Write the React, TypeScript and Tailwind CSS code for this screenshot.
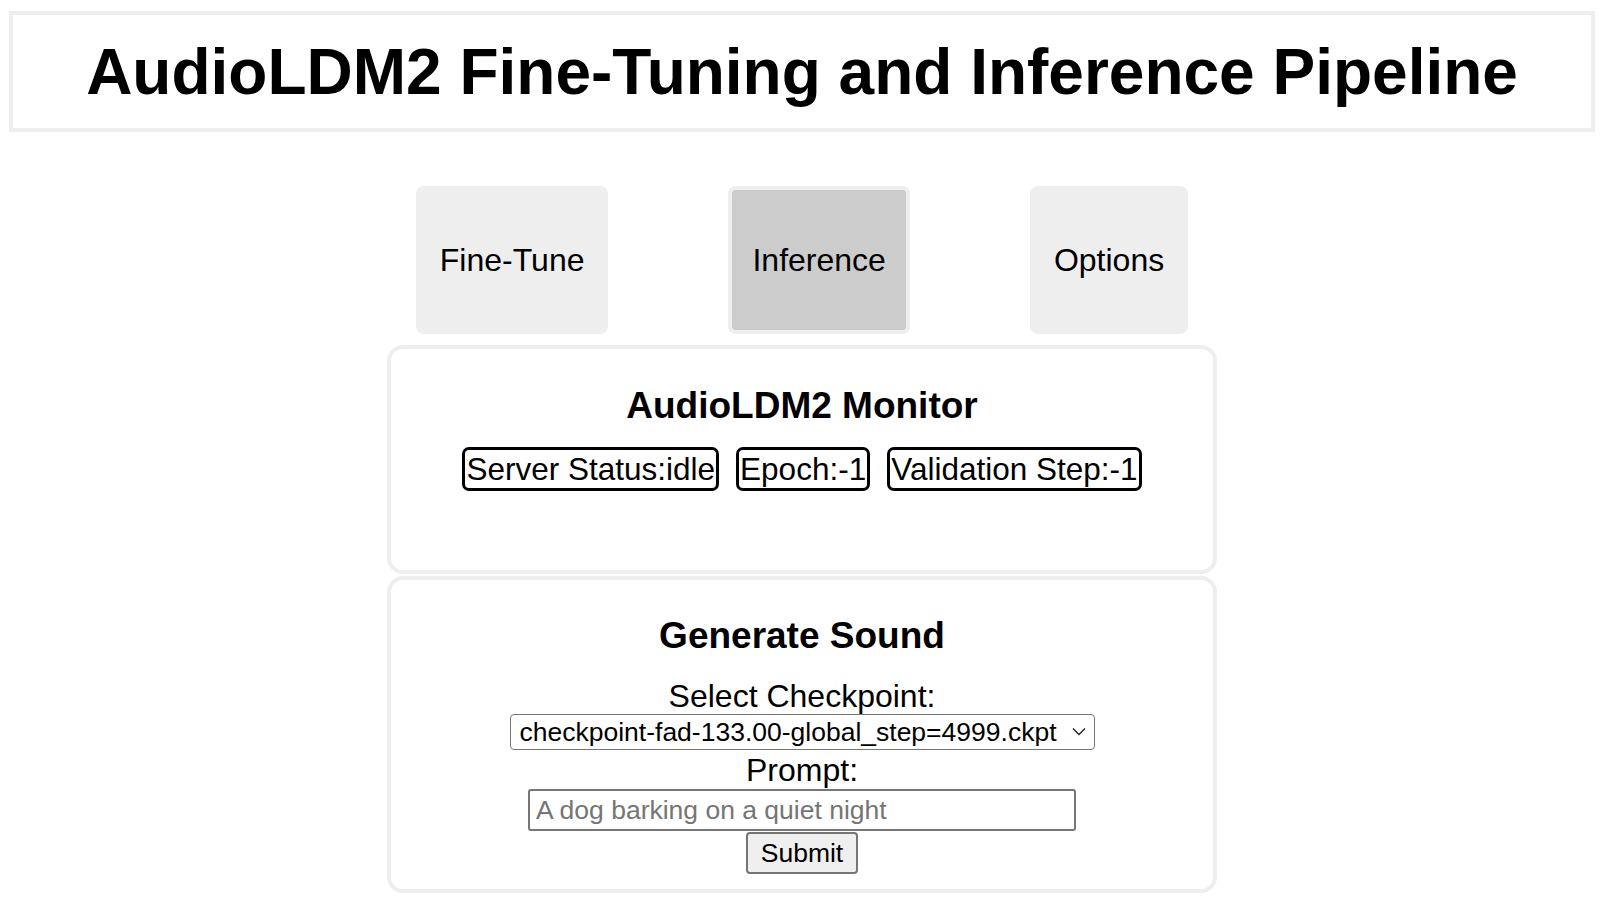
import { useState } from "react";

const tabs = ["Fine-Tune", "Inference", "Options"];

const stats = [
  { label: "Server Status", value: "idle" },
  { label: "Epoch", value: "-1" },
  { label: "Validation Step", value: "-1" },
];

export default function App() {
  const [active, setActive] = useState("Inference");
  const [prompt, setPrompt] = useState("");

  return (
    <div className="min-h-screen bg-white text-black font-['Liberation_Sans',Arial,sans-serif]">
      {/* Header */}
      <div className="px-[9px] pt-[11px]">
        <header className="h-[121px] border-4 border-[#eeeeee] flex items-center justify-center">
          <h1 className="text-[64px] font-bold leading-none">
            AudioLDM2 Fine-Tuning and Inference Pipeline
          </h1>
        </header>
      </div>

      {/* Tabs */}
      <nav className="mt-[54px] flex justify-center gap-[120px]">
        {tabs.map((t) => (
          <button
            key={t}
            onClick={() => setActive(t)}
            className={
              t === active
                ? "h-[148px] px-[20px] flex items-center border-4 border-[#eeeeee] rounded-[8px] bg-[#cccccc] text-[32px] leading-[37px]"
                : "h-[148px] px-[20px] flex items-center border-4 border-[#eeeeee] rounded-[8px] bg-[#eeeeee] text-[32px] leading-[37px]"
            }
          >
            {t}
          </button>
        ))}
      </nav>

      {/* Monitor */}
      <section className="mt-[11px] mx-auto w-[830px] h-[229px] border-4 border-[#eeeeee] rounded-[16px] pt-[35px] flex flex-col items-center">
        <h2 className="text-[37px] font-bold leading-[43px]">AudioLDM2 Monitor</h2>
        <div className="mt-[20px] flex gap-[17px]">
          {stats.map((s) => (
            <div
              key={s.label}
              className="border-[3px] border-black rounded-[7px] px-[1px] text-[31.5px] leading-[38px]"
            >
              {s.label}:{s.value}
            </div>
          ))}
        </div>
      </section>

      {/* Generate */}
      <section className="mt-[2px] mx-auto w-[830px] h-[317px] border-4 border-[#eeeeee] rounded-[16px] pt-[34px] flex flex-col items-center">
        <h2 className="text-[37px] font-bold leading-[43px]">Generate Sound</h2>
        <label className="mt-[21px] text-[32px] leading-[37px]">Select Checkpoint:</label>
        <div className="relative w-[585px] h-[36px] -mt-px">
          <select className="appearance-none w-full h-full border border-[#767676] rounded-[4px] bg-white pl-[9px] pr-[30px] text-[26.5px] leading-[32px] text-black">
            <option>checkpoint-fad-133.00-global_step=4999.ckpt</option>
          </select>
          <svg
            className="absolute right-[9px] top-[13px] pointer-events-none"
            width="14"
            height="9"
            viewBox="0 0 14 9"
            fill="none"
          >
            <path d="M1 1.5l6 6 6-6" stroke="#222" strokeWidth="1.4" />
          </svg>
        </div>
        <label className="mt-[2px] text-[32px] leading-[37px]">Prompt:</label>
        <input
          value={prompt}
          onChange={(e) => setPrompt(e.target.value)}
          placeholder="A dog barking on a quiet night"
          className="w-[548px] h-[42px] border-2 border-[#767676] rounded-[3px] px-[6px] text-[26.5px] placeholder:text-[#757575] outline-none"
        />
        <button className="mt-px w-[112px] h-[42px] bg-[#efefef] border-2 border-[#767676] rounded-[4px] text-[26.5px] leading-none">
          Submit
        </button>
      </section>
    </div>
  );
}
